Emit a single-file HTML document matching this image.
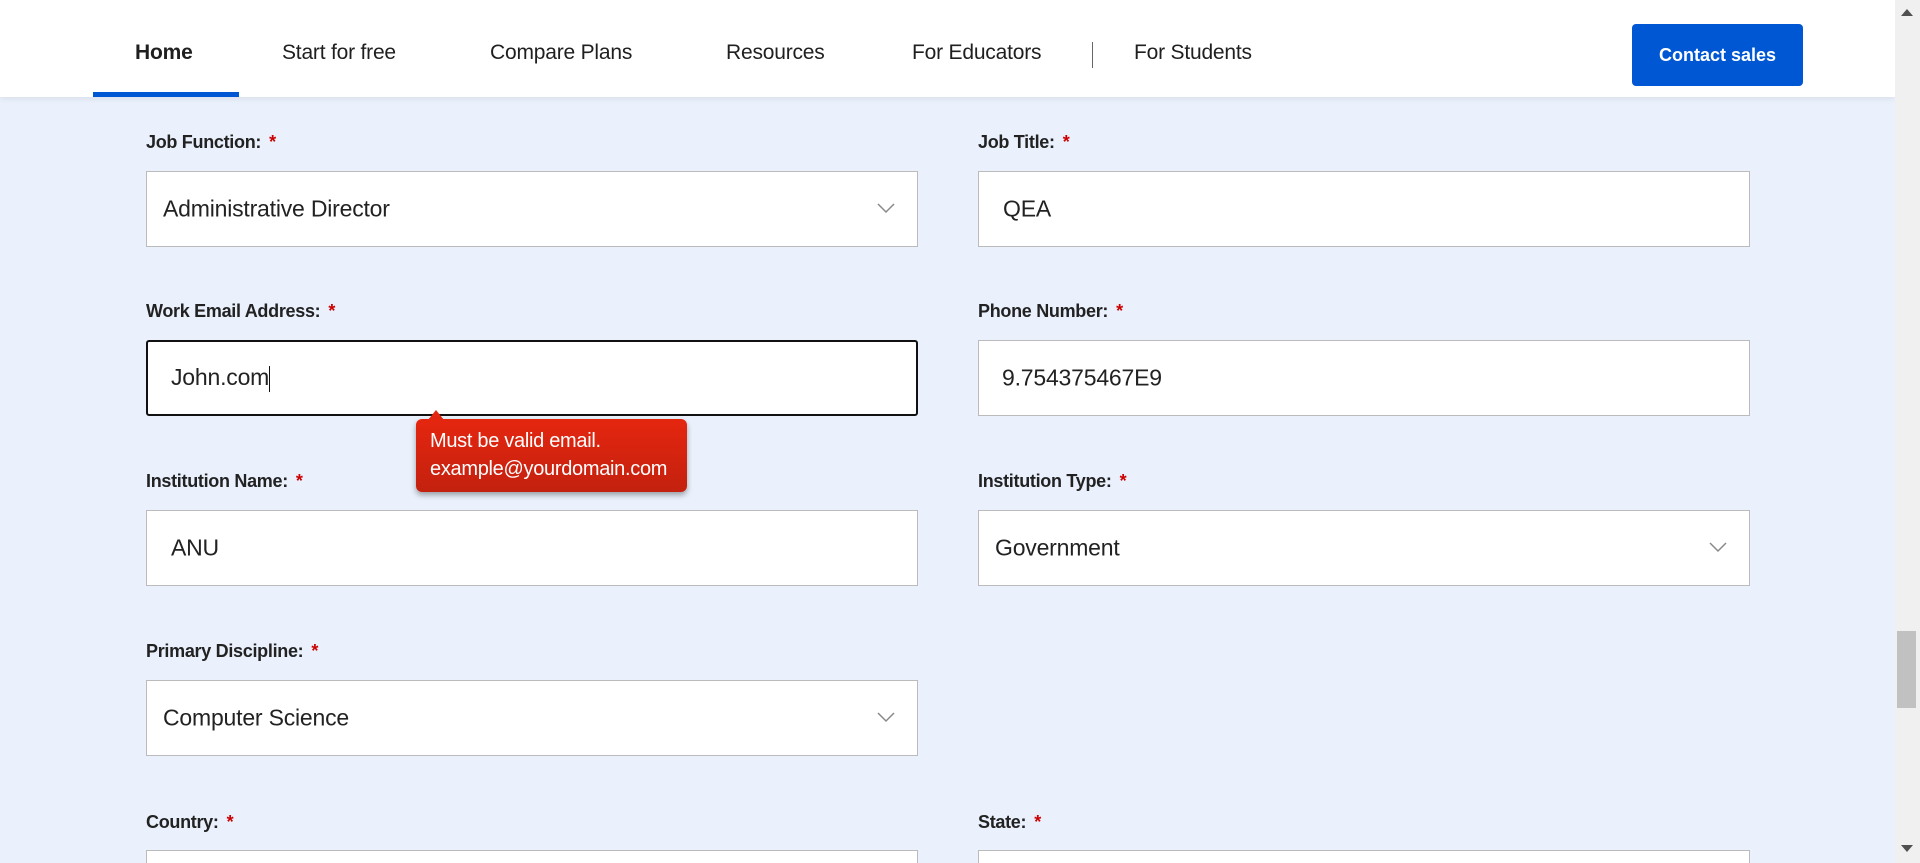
<!DOCTYPE html>
<html><head><meta charset="utf-8"><style>
*{box-sizing:border-box;margin:0;padding:0}
html{width:1920px;height:863px;overflow:hidden}
body{width:1920px;height:863px;overflow:hidden;background:#eaf1fc;font-family:"Liberation Sans",sans-serif;color:#1a1a1a;position:relative}
.hdr{position:absolute;left:0;top:0;width:1895px;height:97px;background:#fff;box-shadow:0 2px 6px rgba(0,0,40,.08)}
.nav{position:absolute;top:41px;font-size:21px;color:#1f1f1f;letter-spacing:-0.2px}
.ul{position:absolute;left:93px;top:92px;width:146px;height:5px;background:#0057d4}
.sep{position:absolute;left:1092px;top:42px;width:1px;height:26px;background:#666}
.btn{position:absolute;left:1632px;top:24px;width:171px;height:62px;background:#0057d4;border-radius:4px;color:#fff;font-weight:bold;font-size:18px;text-align:center;line-height:62px}
.lbl{position:absolute;font-weight:bold;font-size:18px;color:#222;letter-spacing:-0.3px}
.lbl b{color:#c00;margin-left:8px}
.in{position:absolute;width:772px;background:#fff;border:1px solid #bbb;font-size:23px;color:#222;letter-spacing:-0.2px}
.in span{position:absolute;top:50%;transform:translateY(-50%)}
.chev{position:absolute;right:22px;top:50%;margin-top:-6px}
.tip{position:absolute;left:416px;top:419px;width:271px;height:73px;background:linear-gradient(#e5260f,#c3210f);border-radius:6px;box-shadow:0 3px 6px rgba(0,0,0,.35);color:#fff;font-size:20px;line-height:28px;padding:8px 14px;letter-spacing:-0.3px;white-space:nowrap}
.arr{position:absolute;left:428px;top:410px;width:0;height:0;border-left:8px solid transparent;border-right:8px solid transparent;border-bottom:10px solid #e5260f}
.sb{position:absolute;left:1895px;top:0;width:25px;height:863px;background:#f0f0f0}
.th{position:absolute;left:1897px;top:631px;width:19px;height:77px;background:#c1c1c1}
</style></head><body>
<div class="hdr">
<div class="nav" style="left:135px;font-weight:bold">Home</div>
<div class="nav" style="left:282px">Start for free</div>
<div class="nav" style="left:490px">Compare Plans</div>
<div class="nav" style="left:726px">Resources</div>
<div class="nav" style="left:912px">For Educators</div>
<div class="sep"></div>
<div class="nav" style="left:1134px">For Students</div>
<div class="ul"></div>
<div class="btn">Contact sales</div>
</div>

<div class="lbl" style="left:146px;top:132px">Job Function:<b>*</b></div>
<div class="in" style="left:146px;top:171px;height:76px"><span style="left:16px">Administrative Director</span><svg class="chev" width="18" height="11" viewBox="0 0 18 11"><path d="M1 1l8 8 8-8" fill="none" stroke="#888" stroke-width="1.5"/></svg></div>
<div class="lbl" style="left:978px;top:132px">Job Title:<b>*</b></div>
<div class="in" style="left:978px;top:171px;height:76px;width:772px"><span style="left:24px">QEA</span></div>

<div class="lbl" style="left:146px;top:301px">Work Email Address:<b>*</b></div>
<div class="in" style="left:146px;top:340px;height:76px;border:2px solid #111;border-radius:3px"><span style="left:23px">John.com<span style="position:static;display:inline-block;width:1px;height:26px;background:#111;vertical-align:middle;transform:none"></span></span></div>
<div class="lbl" style="left:978px;top:301px">Phone Number:<b>*</b></div>
<div class="in" style="left:978px;top:340px;height:76px"><span style="left:23px">9.754375467E9</span></div>

<div class="lbl" style="left:146px;top:471px">Institution Name:<b>*</b></div>
<div class="in" style="left:146px;top:510px;height:76px"><span style="left:24px">ANU</span></div>
<div class="lbl" style="left:978px;top:471px">Institution Type:<b>*</b></div>
<div class="in" style="left:978px;top:510px;height:76px"><span style="left:16px">Government</span><svg class="chev" width="18" height="11" viewBox="0 0 18 11"><path d="M1 1l8 8 8-8" fill="none" stroke="#888" stroke-width="1.5"/></svg></div>

<div class="lbl" style="left:146px;top:641px">Primary Discipline:<b>*</b></div>
<div class="in" style="left:146px;top:680px;height:76px"><span style="left:16px">Computer Science</span><svg class="chev" width="18" height="11" viewBox="0 0 18 11"><path d="M1 1l8 8 8-8" fill="none" stroke="#888" stroke-width="1.5"/></svg></div>

<div class="lbl" style="left:146px;top:812px">Country:<b>*</b></div>
<div class="in" style="left:146px;top:850px;height:14px;border-bottom:none"></div>
<div class="lbl" style="left:978px;top:812px">State:<b>*</b></div>
<div class="in" style="left:978px;top:850px;height:14px;border-bottom:none"></div>

<div class="arr"></div>
<div class="tip">Must be valid email.<br>example@yourdomain.com</div>

<div class="sb"></div>
<div class="th"></div>
<svg style="position:absolute;left:1901px;top:9px" width="12" height="7"><path d="M0 7L6 0 12 7z" fill="#505050"/></svg>
<svg style="position:absolute;left:1901px;top:845px" width="12" height="7"><path d="M0 0L6 7 12 0z" fill="#505050"/></svg>
</body></html>
